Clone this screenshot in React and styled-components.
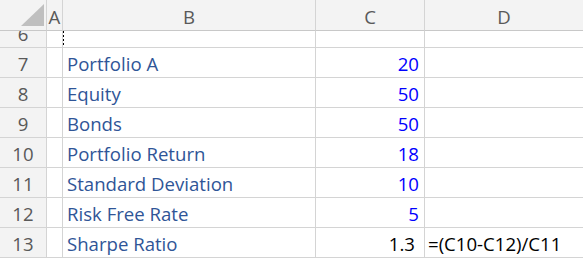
import React from "react";
import styled, { createGlobalStyle, css } from "styled-components";

const Global = createGlobalStyle`
  html, body { margin: 0; padding: 0; background: #ffffff; overflow: hidden; }
  body { font-family: "Open Sans", "Liberation Sans", sans-serif; }
`;

const Sheet = styled.div`
  display: grid;
  width: 584px;
  grid-template-columns: 47px 16px 253px 109px 159px;
  grid-template-rows: 31px 17px repeat(7, 30px);
  font-size: 18.6px;
  line-height: 24px;
`;

const Box = styled.div`
  box-sizing: border-box;
  border-right: 1px solid #d4d4d4;
  border-bottom: 1px solid #d4d4d4;
  overflow: hidden;
  display: flex;
  align-items: flex-end;
  white-space: nowrap;
  position: relative;
`;

const Corner = styled(Box)`
  background: #f3f3f3;
  border-bottom-color: #c8c8c8;
`;

const Triangle = styled.svg`
  position: absolute;
  left: 21px;
  top: 4px;
`;

const ColHeader = styled(Box)`
  background: #f3f3f3;
  border-bottom-color: #c8c8c8;
  justify-content: center;
  color: #595959;
  padding-bottom: 1px;
`;

const RowHeader = styled(Box)`
  background: #f3f3f3;
  justify-content: center;
  color: #595959;
  padding-bottom: 1px;
`;

const Cell = styled(Box)`
  background: #ffffff;
  padding-bottom: 1px;
  justify-content: ${(p) => (p.$align === "right" ? "flex-end" : "flex-start")};
  padding-left: ${(p) => (p.$align === "right" ? 0 : p.$pl ?? 4)}px;
  padding-right: ${(p) => (p.$align === "right" ? p.$pr ?? 5 : 0)}px;
  color: ${(p) =>
    p.$tone === "label" ? "#2f5597" : p.$tone === "input" ? "#0000ff" : "#000000"};
  ${(p) =>
    p.$marked &&
    css`
      &::before {
        content: "";
        position: absolute;
        left: -1px;
        top: 0;
        width: 2px;
        height: 15px;
        background: repeating-linear-gradient(
          to bottom,
          #000000 0 2px,
          transparent 2px 4px
        );
      }
    `}
`;

const rows = [
  { n: 6, label: "", value: "", tone: "input", d: "", marked: true },
  { n: 7, label: "Portfolio A", value: "20", tone: "input" },
  { n: 8, label: "Equity", value: "50", tone: "input" },
  { n: 9, label: "Bonds", value: "50", tone: "input" },
  { n: 10, label: "Portfolio Return", value: "18", tone: "input" },
  { n: 11, label: "Standard Deviation", value: "10", tone: "input" },
  { n: 12, label: "Risk Free Rate", value: "5", tone: "input" },
  { n: 13, label: "Sharpe Ratio", value: "1.3", tone: "plain", d: "=(C10-C12)/C11", pr: 9 },
];

export default function App() {
  return (
    <>
      <Global />
      <Sheet>
        <Corner>
          <Triangle width="23" height="22" viewBox="0 0 23 22">
            <polygon points="23,0 23,22 0,22" fill="#bfbfbf" />
          </Triangle>
        </Corner>
        <ColHeader>A</ColHeader>
        <ColHeader>B</ColHeader>
        <ColHeader>C</ColHeader>
        <ColHeader>D</ColHeader>
        {rows.map((r) => (
          <React.Fragment key={r.n}>
            <RowHeader>{r.n}</RowHeader>
            <Cell />
            <Cell $tone="label" $marked={r.marked}>{r.label}</Cell>
            <Cell $align="right" $tone={r.tone} $pr={r.pr}>{r.value}</Cell>
            <Cell $tone="plain" $pl={3}>{r.d}</Cell>
          </React.Fragment>
        ))}
      </Sheet>
    </>
  );
}
